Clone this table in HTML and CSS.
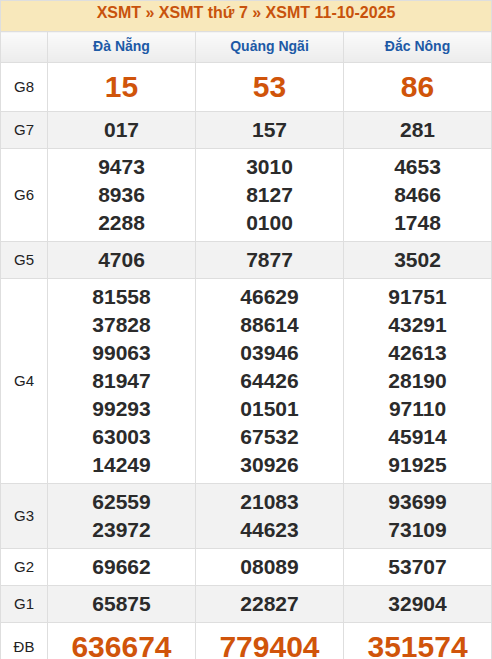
FILE: index.html
```html
<!DOCTYPE html>
<html lang="vi">
<head>
<meta charset="utf-8">
<link rel="stylesheet" href="styles.css">
</head>
<body>
<table class="kq">
  <colgroup><col class="c-lbl"><col class="c-prov"><col class="c-prov"><col class="c-prov"></colgroup>
  <tr class="title"><td colspan="4">XSMT » XSMT thứ 7 » XSMT 11-10-2025</td></tr>
  <tr class="prov"><th class="lbl"></th><th>Đà Nẵng</th><th>Quảng Ngãi</th><th>Đắc Nông</th></tr>
  <tr class="big"><td class="lbl">G8</td><td>15</td><td>53</td><td>86</td></tr>
  <tr class="alt"><td class="lbl">G7</td><td>017</td><td>157</td><td>281</td></tr>
  <tr><td class="lbl">G6</td><td>9473<br>8936<br>2288</td><td>3010<br>8127<br>0100</td><td>4653<br>8466<br>1748</td></tr>
  <tr class="alt"><td class="lbl">G5</td><td>4706</td><td>7877</td><td>3502</td></tr>
  <tr><td class="lbl">G4</td><td>81558<br>37828<br>99063<br>81947<br>99293<br>63003<br>14249</td><td>46629<br>88614<br>03946<br>64426<br>01501<br>67532<br>30926</td><td>91751<br>43291<br>42613<br>28190<br>97110<br>45914<br>91925</td></tr>
  <tr class="alt"><td class="lbl">G3</td><td>62559<br>23972</td><td>21083<br>44623</td><td>93699<br>73109</td></tr>
  <tr><td class="lbl">G2</td><td>69662</td><td>08089</td><td>53707</td></tr>
  <tr class="alt"><td class="lbl">G1</td><td>65875</td><td>22827</td><td>32904</td></tr>
  <tr class="big"><td class="lbl">ĐB</td><td>636674</td><td>779404</td><td>351574</td></tr>
</table>
</body>
</html>
```

FILE: styles.css
```css
html, body {
  margin: 0;
  padding: 0;
  background: #fff;
}
.kq {
  width: 492px;
  border-collapse: collapse;
  table-layout: fixed;
  font-family: "Liberation Sans", Arial, sans-serif;
  border: 1px solid #c8c8c8;
}
.c-lbl { width: 47px; }
.c-prov { width: 148px; }
.kq td, .kq th {
  border: 1px solid #dedede;
  text-align: center;
  padding: 4px 0;
  font-size: 21px;
  font-weight: bold;
  line-height: 28px;
  color: #2b2b2b;
}
.kq .lbl {
  font-size: 15px;
  font-weight: normal;
  color: #222;
}
.title td {
  background: #f8e8bb;
  color: #c8520c;
  font-size: 16px;
  line-height: 21px;
  height: 21px;
  padding: 1px 0 8px;
}
.prov th {
  background: linear-gradient(#fbfbfb, #ececec);
  color: #1d5aa6;
  font-size: 14px;
  line-height: 22px;
  padding: 3px 0 5px;
}
.big td {
  font-size: 30px;
  line-height: 40px;
  color: #d0540a;
}
.big td.lbl {
  color: #222;
}
.alt td {
  background: #f2f2f2;
}
```
